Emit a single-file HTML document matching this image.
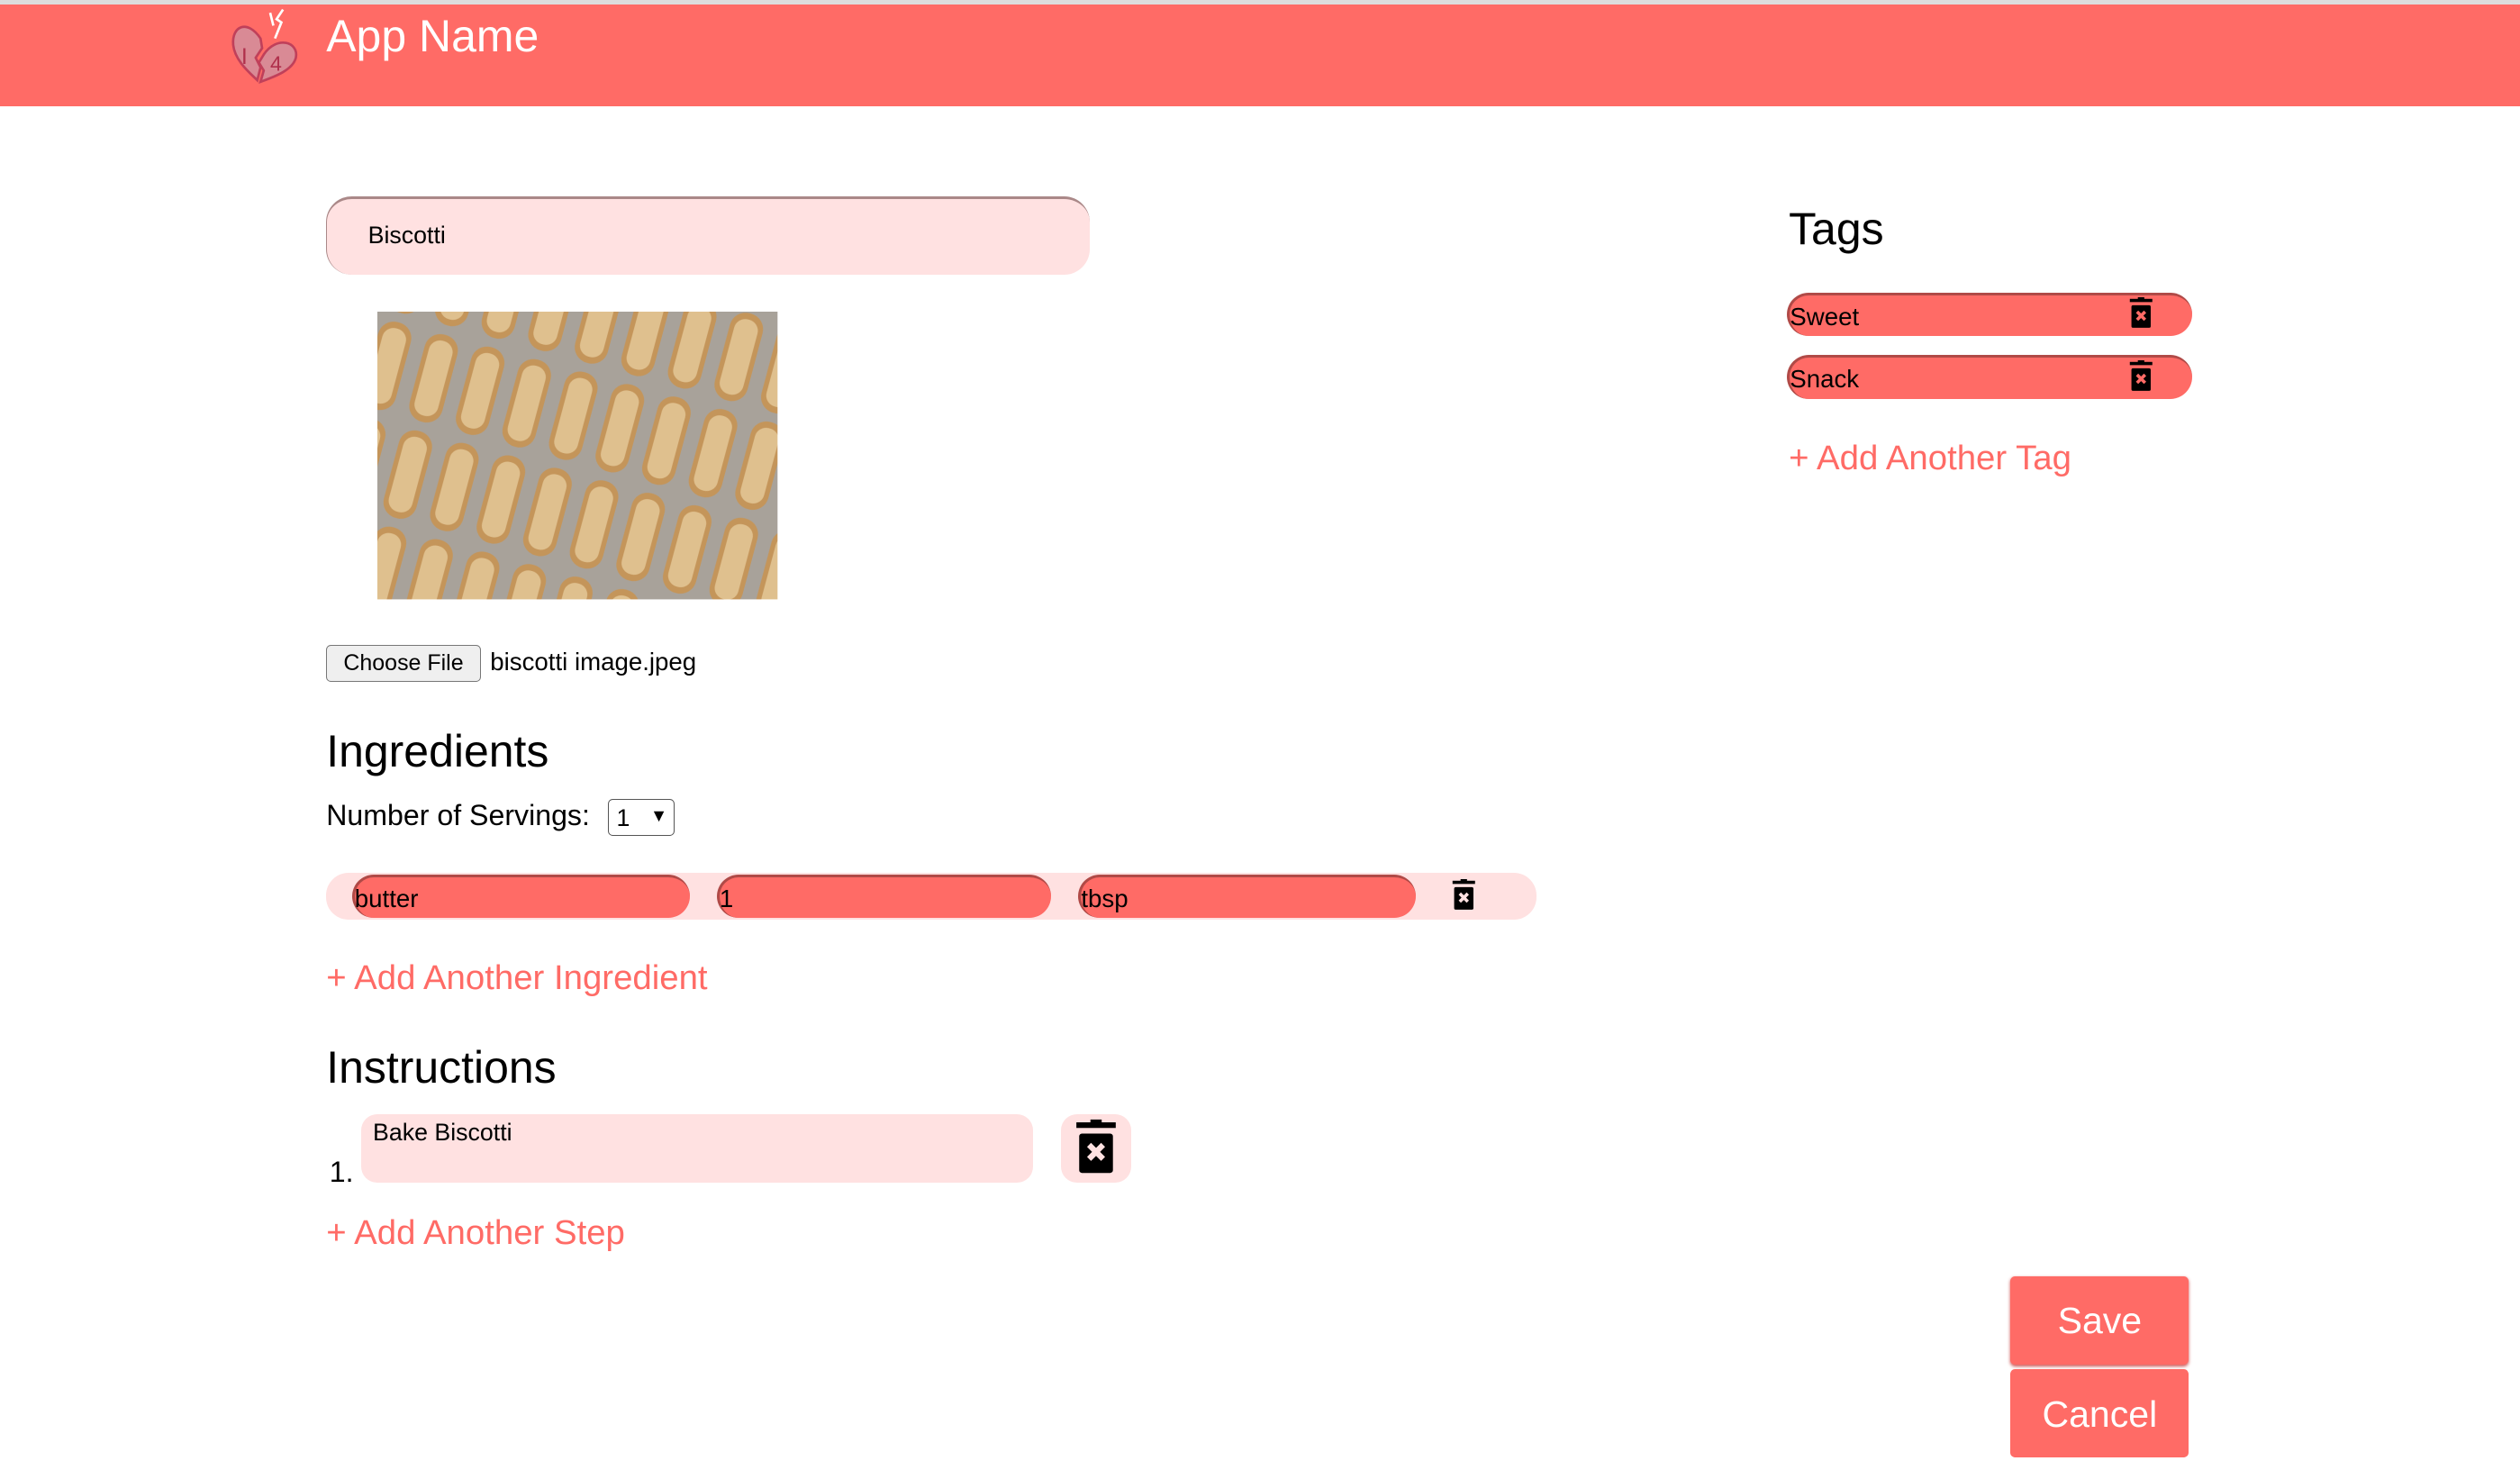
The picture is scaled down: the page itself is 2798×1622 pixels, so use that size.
<!DOCTYPE html>
<html><head><meta charset="utf-8"><style>
html,body{margin:0;padding:0;background:#fff;}
body{width:1568px;height:900px;zoom:1.78444;position:relative;overflow:hidden;font-family:"Liberation Sans",sans-serif;color:#000;}
.a{position:absolute;}
.hdr{left:0;top:3px;width:1568px;height:63px;background:#ff6b66;}
.title{left:203px;top:6px;font-size:28px;color:#fff;}
.pill{background:#ff6b66;border-radius:14px;border-top:2px solid #b04a47;border-left:2px solid #b04a47;box-sizing:border-box;font-size:15.5px;}
.link{color:#ff6b66;font-size:21.5px;}
h2{margin:0;font-weight:normal;font-size:28px;}
.trash{width:16px;height:20px}
</style></head><body>
<div class="a" style="left:0;top:0;width:1568px;height:3px;background:#ddd"></div>
<div class="a hdr"></div>
<svg class="a" style="left:140px;top:4px" width="52" height="50" viewBox="0 0 52 50">
<path d="M22 20 C14 8 4 12 5 24 C6 34 16 42 20 46 L22 38 L19 32 L23 26 Z" fill="#d98a95" stroke="#c0405a" stroke-width="1.5"/>
<path d="M24 30 C32 18 46 22 44 32 C42 40 30 44 22 47 L24 40 L21 35 Z" fill="#d98a95" stroke="#c0405a" stroke-width="1.5"/>
<path d="M28 4 L30 12 M36 2 L32 8 L35 10 L31 20" stroke="#fff" stroke-width="1.5" fill="none"/>
<text x="10" y="36" font-size="14" fill="#b0304c">I</text><text x="28" y="40" font-size="13" fill="#b0304c">4</text>
</svg>
<div class="a title">App Name</div>

<div class="a" style="left:203px;top:122px;width:475px;height:49px;background:#ffe1e1;border-radius:16px;border-top:2px solid #a88;border-left:1px solid #a88;box-sizing:border-box;"></div>
<div class="a" style="left:229px;top:138px;font-size:15px">Biscotti</div>

<svg class="a" style="left:235px;top:194px" width="249" height="179">
<defs><pattern id="p" width="30" height="62" patternUnits="userSpaceOnUse" patternTransform="rotate(15)">
<rect width="30" height="62" fill="#a8a29a"/><rect x="4" y="3" width="21" height="56" rx="10" fill="#c4955a"/><rect x="7" y="7" width="15" height="48" rx="7" fill="#dfc08e"/></pattern></defs>
<rect width="249" height="179" fill="url(#p)"/></svg>

<div class="a" style="left:203px;top:401px;width:95px;height:22px;border:1px solid #777;border-radius:3px;background:#efefef;font-size:14px;text-align:center;line-height:22px">Choose File</div>
<div class="a" style="left:305px;top:403px;font-size:15.5px">biscotti image.jpeg</div>

<h2 class="a" style="left:203px;top:451px">Ingredients</h2>
<div class="a" style="left:203px;top:497px;font-size:18px">Number of Servings:</div>
<div class="a" style="left:378px;top:497px;width:42px;height:23px;border:1px solid #555;border-radius:3px;font-size:15px;line-height:23px;box-sizing:border-box;padding-left:5px">1 <span style="position:absolute;right:4px;top:-1px;font-size:11px">&#9660;</span></div>

<div class="a" style="left:203px;top:543px;width:753px;height:29px;background:#ffe1e1;border-radius:14px"></div>
<div class="a pill" style="left:219px;top:544px;width:210px;height:27px;line-height:27px">butter</div>
<div class="a pill" style="left:446px;top:544px;width:208px;height:27px;line-height:27px">1</div>
<div class="a pill" style="left:671px;top:544px;width:210px;height:27px;line-height:27px">tbsp</div>
<svg class="a trash" style="left:903px;top:547px" viewBox="0 0 16 20"><rect x="1" y="1" width="14" height="2" fill="#000"/><rect x="6" y="0" width="4" height="2" fill="#000"/><rect x="2" y="5" width="12" height="14" rx="1" fill="#000"/><path d="M5.5 9 L10.5 14 M10.5 9 L5.5 14" stroke="#ffe1e1" stroke-width="2"/></svg>

<div class="a link" style="left:203px;top:596px">+ Add Another Ingredient</div>

<h2 class="a" style="left:203px;top:648px">Instructions</h2>
<div class="a" style="left:205px;top:719px;font-size:18px">1.</div>
<div class="a" style="left:225px;top:693px;width:418px;height:43px;background:#ffe1e1;border-radius:10px"></div>
<div class="a" style="left:232px;top:696px;font-size:15px">Bake Biscotti</div>
<div class="a" style="left:660px;top:693px;width:44px;height:43px;background:#ffe1e1;border-radius:10px"></div>
<svg class="a" style="left:668px;top:696px" width="28" height="36" viewBox="0 0 16 20"><rect x="1" y="1" width="14" height="2" fill="#000"/><rect x="6" y="0" width="4" height="2" fill="#000"/><rect x="2" y="5" width="12" height="14" rx="1" fill="#000"/><path d="M5.5 9 L10.5 14 M10.5 9 L5.5 14" stroke="#ffe1e1" stroke-width="2"/></svg>

<div class="a link" style="left:203px;top:755px">+ Add Another Step</div>

<h2 class="a" style="left:1113px;top:126px">Tags</h2>
<div class="a pill" style="left:1112px;top:182px;width:252px;height:27px;line-height:27px">Sweet</div>
<div class="a pill" style="left:1112px;top:221px;width:252px;height:27px;line-height:27px">Snack</div>
<svg class="a trash" style="left:1324px;top:185px" viewBox="0 0 16 20"><rect x="1" y="1" width="14" height="2" fill="#000"/><rect x="6" y="0" width="4" height="2" fill="#000"/><rect x="2" y="5" width="12" height="14" rx="1" fill="#000"/><path d="M5.5 9 L10.5 14 M10.5 9 L5.5 14" stroke="#ff6b66" stroke-width="2"/></svg>
<svg class="a trash" style="left:1324px;top:224px" viewBox="0 0 16 20"><rect x="1" y="1" width="14" height="2" fill="#000"/><rect x="6" y="0" width="4" height="2" fill="#000"/><rect x="2" y="5" width="12" height="14" rx="1" fill="#000"/><path d="M5.5 9 L10.5 14 M10.5 9 L5.5 14" stroke="#ff6b66" stroke-width="2"/></svg>
<div class="a link" style="left:1113px;top:273px">+ Add Another Tag</div>

<div class="a" style="left:1251px;top:794px;width:111px;height:55px;background:#ff6b66;border-radius:3px;color:#fff;font-size:23px;text-align:center;line-height:55px;box-shadow:0 1px 2px #c55">Save</div>
<div class="a" style="left:1251px;top:852px;width:111px;height:55px;background:#ff6b66;border-radius:3px;color:#fff;font-size:23px;text-align:center;line-height:57px">Cancel</div>
</body></html>
